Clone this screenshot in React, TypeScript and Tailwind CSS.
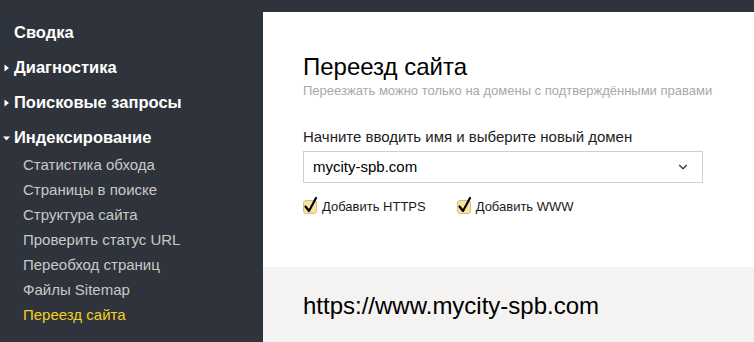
import { ChevronDown } from "lucide-react";

const subItems = [
  "Статистика обхода",
  "Страницы в поиске",
  "Структура сайта",
  "Проверить статус URL",
  "Переобход страниц",
  "Файлы Sitemap",
];

function Caret({ open }: { open?: boolean }) {
  return (
    <svg className="absolute left-[3px] top-1/2 -translate-y-1/2" width="7" height="8" viewBox="0 0 7 8">
      {open ? <path d="M0 2.5h7L3.5 6.5z" fill="#fff" /> : <path d="M1.5 0.5v7l4.5-3.5z" fill="#fff" />}
    </svg>
  );
}

function Check({ label }: { label: string }) {
  return (
    <label className="flex items-center gap-[5px]">
      <span className="relative w-[14px] h-[14px] rounded-[3px] bg-[#f8e3a3] border border-[#d8c07a]">
        <svg className="absolute -left-[1px] -top-[5px]" width="16" height="18" viewBox="0 0 16 18">
          <path d="M2.5 10.5l3.5 4.5L13 2" fill="none" stroke="#000" strokeWidth="2.2" strokeLinecap="round" strokeLinejoin="round" />
        </svg>
      </span>
      <span className="text-[13px] text-[#1a1a1a]">{label}</span>
    </label>
  );
}

export default function App() {
  return (
    <div className="flex w-[754px] h-[342px] overflow-hidden bg-[#2f333b] font-['Liberation_Sans',Arial,sans-serif]">
      {/* Sidebar */}
      <nav className="w-[263px] shrink-0 pt-[20px]">
        <div className="text-white text-[16.5px] font-bold">
          <div className="pl-[14px] h-[25px] leading-[25px]">Сводка</div>
          <div className="relative pl-[14px] mt-[10px] h-[25px] leading-[25px]"><Caret />Диагностика</div>
          <div className="relative pl-[14px] mt-[10px] h-[25px] leading-[25px]"><Caret />Поисковые запросы</div>
          <div className="relative pl-[14px] mt-[10px] h-[25px] leading-[25px]"><Caret open />Индексирование</div>
        </div>
        <ul className="pl-[23px] mt-[2px] text-[15px] text-[#c9c9c9]">
          {subItems.map((s) => (
            <li key={s} className="h-[25px] leading-[25px]">{s}</li>
          ))}
          <li className="h-[25px] leading-[25px] text-[#f5cf1f]">Переезд сайта</li>
        </ul>
      </nav>

      {/* Main */}
      <main className="flex-1 pt-[12px] flex flex-col">
        <section className="bg-white h-[255px] pl-[40px] pt-[40px]">
          <h1 className="text-[24px] leading-[30px] text-black">Переезд сайта</h1>
          <p className="text-[13px] leading-[18px] text-[#a8a8a8]">Переезжать можно только на домены с подтверждёнными правами</p>
          <div className="mt-[27px] text-[15px] leading-[20px] text-[#222]">Начните вводить имя и выберите новый домен</div>
          <div className="mt-[4px] w-[400px] h-[32px] border border-[#cfcfcf] flex items-center justify-between pl-[9px] pr-[12px]">
            <span className="text-[15px] text-black">mycity-spb.com</span>
            <ChevronDown className="w-[14px] h-[14px] text-[#333]" strokeWidth={2} />
          </div>
          <div className="mt-[14px] flex gap-[31px]">
            <Check label="Добавить HTTPS" />
            <Check label="Добавить WWW" />
          </div>
        </section>
        <section className="flex-1 bg-[#f4f3f2] pl-[40px] pt-[24px]">
          <div className="text-[24px] leading-[30px] text-black">https://www.mycity-spb.com</div>
        </section>
      </main>
    </div>
  );
}
